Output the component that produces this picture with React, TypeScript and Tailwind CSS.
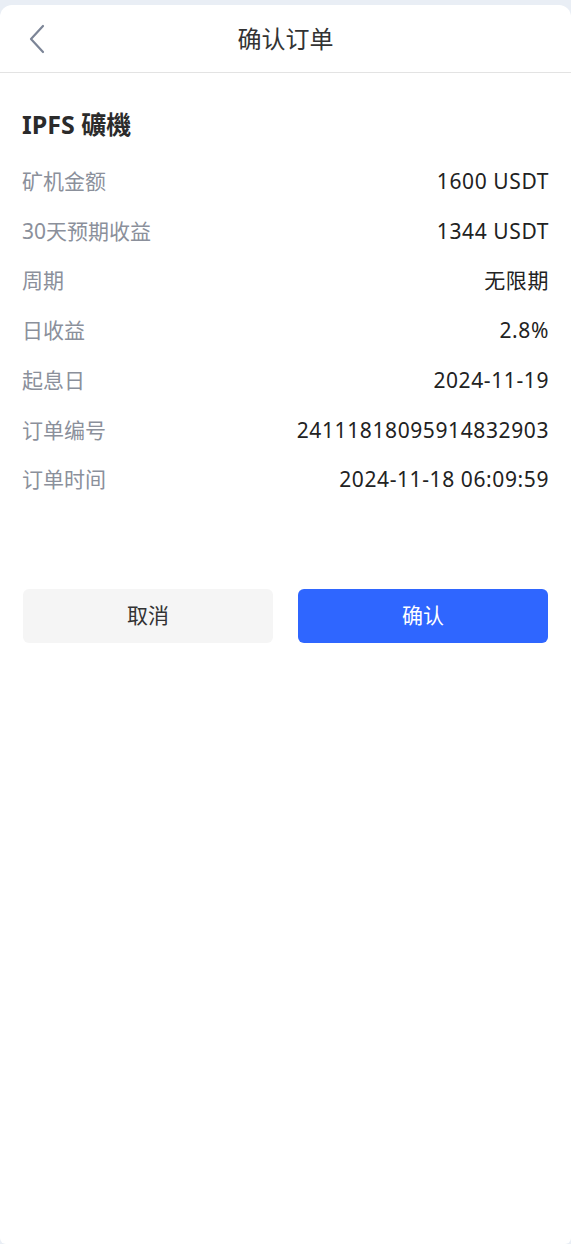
const rows: [string, string][] = [
    ["矿机金额", "1600 USDT"],
    ["30天预期收益", "1344 USDT"],
    ["周期", "无限期"],
    ["日收益", "2.8%"],
    ["起息日", "2024-11-19"],
    ["订单编号", "24111818095914832903"],
    ["订单时间", "2024-11-18 06:09:59"],
]

export default function App() {
    return (
        <div
            className="min-h-screen bg-[#e9eef5] pt-[5px]"
            style={{ fontFamily: '"Noto Sans", "Noto Sans CJK SC", sans-serif' }}
        >
            <div className="min-h-[1239px] bg-white rounded-t-[12px] rounded-b-[6px]">
                {/* Header */}
                <div className="relative h-[68px] flex items-center justify-center border-b border-[#e3e3e3]">
                    <button className="absolute left-[22px] top-[19px] text-[#7c8597]">
                        <svg width="30" height="30" viewBox="0 0 30 30" fill="none">
                            <path d="M21 2 L9 15 L21 28" stroke="currentColor" strokeWidth="2.2" strokeLinecap="round" strokeLinejoin="round" />
                        </svg>
                    </button>
                    <h1 className="text-[24px] text-[#333]">确认订单</h1>
                </div>

                {/* Details */}
                <div className="px-[22px] pt-[35px]">
                    <h2 className="text-[25px] leading-[32px] font-bold text-[#2b2b2b]">IPFS 礦機</h2>
                    <div className="mt-[17px]">
                        {rows.map(([label, value]) => (
                            <div key={label} className="h-[49.7px] flex items-center justify-between text-[21px]">
                                <span className="text-[#8b909b]">{label}</span>
                                <span className="text-[#222] tracking-[0.6px]">{value}</span>
                            </div>
                        ))}
                    </div>
                </div>

                {/* Actions */}
                <div className="grid grid-cols-2 gap-[25px] px-[23px] mt-[84px]">
                    <button className="h-[54px] rounded-[6px] bg-[#f5f5f5] text-[21px] text-[#333]">取消</button>
                    <button className="h-[54px] rounded-[6px] bg-[#2f66ff] text-[21px] text-white">确认</button>
                </div>
            </div>
        </div>
    )
}
